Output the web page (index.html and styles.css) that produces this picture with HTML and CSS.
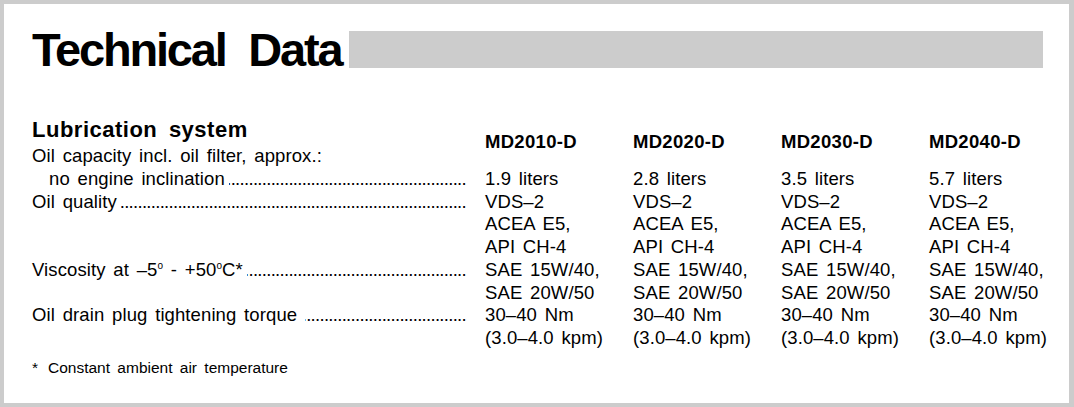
FILE: index.html
```html
<!DOCTYPE html>
<html lang="en">
<head>
<meta charset="utf-8">
<title>Technical Data</title>
<link rel="stylesheet" href="styles.css">
</head>
<body>
<div class="page">
  <div class="title-row">
    <h1 class="title">Technical Data</h1>
    <div class="bar"></div>
  </div>

  <div class="spec">
    <div class="head-label">
      <h2 class="section">Lubrication system</h2>
      <div class="line">Oil capacity incl. oil filter, approx.:</div>
    </div>
    <div class="model">MD2010-D</div>
    <div class="model">MD2020-D</div>
    <div class="model">MD2030-D</div>
    <div class="model">MD2040-D</div>

    <div class="label indent"><span>no engine inclination</span><span class="leader"></span></div>
    <div class="val">1.9 liters</div>
    <div class="val">2.8 liters</div>
    <div class="val">3.5 liters</div>
    <div class="val">5.7 liters</div>

    <div class="label"><span>Oil quality</span><span class="leader"></span></div>
    <div class="val">VDS–2<br>ACEA E5,<br>API CH-4</div>
    <div class="val">VDS–2<br>ACEA E5,<br>API CH-4</div>
    <div class="val">VDS–2<br>ACEA E5,<br>API CH-4</div>
    <div class="val">VDS–2<br>ACEA E5,<br>API CH-4</div>

    <div class="label"><span>Viscosity at –5<sup class="deg">o</sup> - +50<sup class="deg">o</sup>C*</span><span class="leader"></span></div>
    <div class="val">SAE 15W/40,<br>SAE 20W/50</div>
    <div class="val">SAE 15W/40,<br>SAE 20W/50</div>
    <div class="val">SAE 15W/40,<br>SAE 20W/50</div>
    <div class="val">SAE 15W/40,<br>SAE 20W/50</div>

    <div class="label"><span>Oil drain plug tightening torque</span><span class="leader gap"></span></div>
    <div class="val">30–40 Nm<br>(3.0–4.0 kpm)</div>
    <div class="val">30–40 Nm<br>(3.0–4.0 kpm)</div>
    <div class="val">30–40 Nm<br>(3.0–4.0 kpm)</div>
    <div class="val">30–40 Nm<br>(3.0–4.0 kpm)</div>
  </div>

  <p class="note"><span class="star">*</span>Constant ambient air temperature</p>
</div>
</body>
</html>
```

FILE: styles.css
```css
html, body {
  margin: 0;
  padding: 0;
  background: #fff;
}

.page {
  width: 1074px;
  height: 407px;
  box-sizing: border-box;
  border: 4px solid #cccccc;
  border-right-width: 5px;
  background: #fff;
  padding: 22px 26px 0 28px;
  font-family: "Liberation Sans", Arial, sans-serif;
  color: #000;
  overflow: hidden;
}

.title-row {
  display: flex;
  align-items: flex-start;
}

.title {
  margin: 0;
  font-size: 47px;
  line-height: 47px;
  font-weight: bold;
  letter-spacing: -2.2px;
  word-spacing: 12px;
  white-space: nowrap;
}

.bar {
  flex: 1;
  height: 37px;
  margin-top: 5px;
  margin-left: 8px;
  background: #cccccc;
}

.spec {
  margin-top: 44px;
  display: grid;
  grid-template-columns: 453px 148px 148px 148px 1fr;
  font-size: 18.5px;
  line-height: 22.7px;
  letter-spacing: 0.1px;
  word-spacing: 2.5px;
}

.head-label {
  display: block;
}

.section {
  margin: 0 0 2.3px;
  font-size: 22px;
  line-height: 26px;
  font-weight: bold;
  letter-spacing: 0.5px;
  word-spacing: 5px;
  white-space: nowrap;
}

.line {
  white-space: nowrap;
}

.model {
  align-self: center;
  font-weight: bold;
  letter-spacing: 0.3px;
  white-space: nowrap;
}

.label {
  display: flex;
  align-items: flex-start;
  padding-right: 19px;
  white-space: nowrap;
}

.indent {
  padding-left: 17px;
}

.leader {
  flex: 1;
  margin-left: 4px;
  overflow: hidden;
  direction: rtl;
  white-space: nowrap;
  letter-spacing: -0.7px;
}

.leader.gap {
  margin-left: 8px;
}

.leader::after {
  content: "............................................................................................................................................................................................";
}

.val {
  white-space: nowrap;
}

.deg {
  font-size: 10px;
  line-height: 0;
  vertical-align: 7px;
  letter-spacing: 0;
}

.note {
  margin: 8px 0 0;
  font-size: 15.5px;
  line-height: 20px;
  letter-spacing: 0;
  word-spacing: 3px;
  white-space: nowrap;
}

.star {
  display: inline-block;
  width: 16px;
}
```
